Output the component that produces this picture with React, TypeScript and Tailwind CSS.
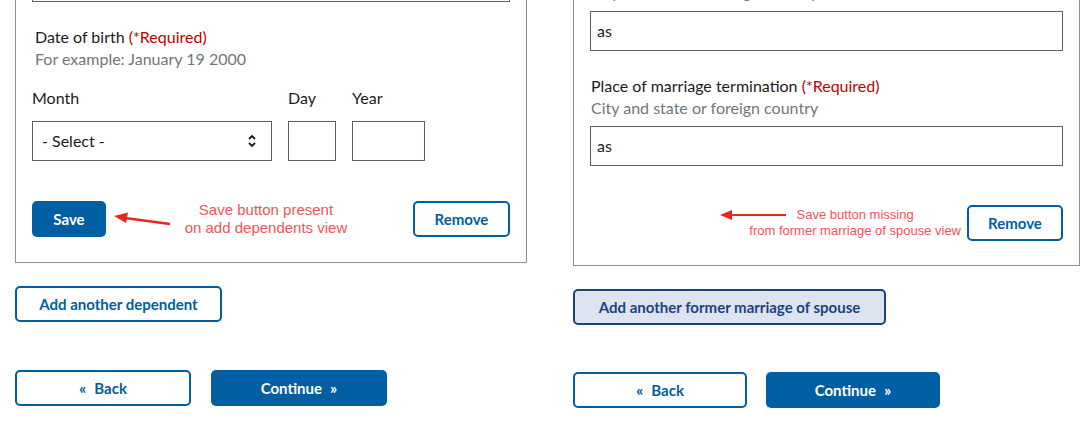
const font = { fontFamily: "Lato, 'Open Sans', sans-serif" };

const Required = () => <span className="text-[#c00000]">(*Required)</span>;

const SelectArrows = () => (
  <svg width="10" height="16" viewBox="0 0 10 16" className="text-[#1b1b1b]">
    <path d="M2 6 L5 3 L8 6" fill="none" stroke="currentColor" strokeWidth="1.8" />
    <path d="M2 10 L5 13 L8 10" fill="none" stroke="currentColor" strokeWidth="1.8" />
  </svg>
);

const OutlineButton = ({ label, className = "" }: { label: React.ReactNode; className?: string }) => (
  <button
    className={`h-9 rounded-[5px] border-2 border-[#005ea2] bg-white text-[15px] font-bold text-[#005ea2] flex items-center justify-center ${className}`}
  >
    {label}
  </button>
);

const PrimaryButton = ({ label, className = "" }: { label: React.ReactNode; className?: string }) => (
  <button
    className={`h-9 rounded-[5px] bg-[#005ea2] text-[15px] font-bold text-white flex items-center justify-center ${className}`}
  >
    {label}
  </button>
);

const NavButtons = ({ narrow = false }: { narrow?: boolean }) => (
  <div className={narrow ? "flex gap-[19px]" : "flex gap-5"}>
    <OutlineButton
      className={narrow ? "w-[174px]" : "w-[176px]"}
      label={
        <span className="flex items-center gap-2">
          <span className="text-[16px]">«</span>Back
        </span>
      }
    />
    <PrimaryButton
      className={narrow ? "w-[174px]" : "w-[176px]"}
      label={
        <span className="flex items-center gap-2">
          Continue<span className="text-[16px]">»</span>
        </span>
      }
    />
  </div>
);

const Annotation = ({ children }: { children: React.ReactNode }) => (
  <div style={{ fontFamily: "'Liberation Sans', Arial, sans-serif" }} className="text-center text-[#f25555]">
    {children}
  </div>
);

export default function App() {
  return (
    <div className="h-[427px] w-[1087px] overflow-hidden bg-white text-[#1b1b1b]" style={font}>
      <div className="flex items-start pl-[15px]">
        {/* left: dependents */}
        <div className="mt-[-55px] w-[512px]">
          <div className="border border-[#8d9195] px-4 pt-4 pb-[25px]">
            <div className="h-10 border border-[#5b616b]" />
            <div className="mt-[24px] pl-[3px] text-[16px] leading-[22px]">
              Date of birth <Required />
            </div>
            <div className="pl-[3px] text-[16px] leading-[22px] text-[#71767a]">For example: January 19 2000</div>
            <div className="mt-[17px] flex gap-4 text-[16px] leading-[22px]">
              <div className="w-[240px]">Month</div>
              <div className="w-12">Day</div>
              <div>Year</div>
            </div>
            <div className="mt-3 flex gap-4">
              <div className="flex h-10 w-[240px] items-center justify-between border border-[#5b616b] pl-[9px] pr-[14px] text-[16px]">
                <span>- Select -</span>
                <SelectArrows />
              </div>
              <div className="h-10 w-12 border border-[#5b616b]" />
              <div className="h-10 w-[73px] border border-[#5b616b]" />
            </div>
            <div className="mt-10 flex items-center">
              <PrimaryButton className="w-[74px]" label="Save" />
              <svg width="60" height="16" viewBox="0 0 60 16" className="ml-[7px] mt-[2px]">
                <line x1="12" y1="6" x2="57" y2="12" stroke="#e8261f" strokeWidth="2.4" />
                <path d="M1 4 L15 0.5 L13 11 Z" fill="#e8261f" />
              </svg>
              <Annotation>
                <div className="ml-[8px] w-[170px] text-[15px] leading-[18px]">
                  Save button present
                  <br />
                  on add dependents view
                </div>
              </Annotation>
              <OutlineButton className="ml-auto w-[97px]" label="Remove" />
            </div>
          </div>
          <OutlineButton className="mt-[23px] w-[207px]" label="Add another dependent" />
          <div className="mt-[48px]">
            <NavButtons />
          </div>
        </div>

        {/* right: former marriage of spouse */}
        <div className="ml-[46px] mt-[-58px] w-[507px]">
          <div className="border border-[#8d9195] px-4 pt-4 pb-[24px]">
            <div className="pl-[1px] text-[16px] leading-[22px]">
              Place of marriage <Required />
            </div>
            <div className="pl-[1px] text-[16px] leading-[22px] text-[#71767a]">City and state or foreign country</div>
            <div className="mt-[8px] flex h-10 items-center border border-[#5b616b] pl-[6px] text-[16px]">as</div>
            <div className="mt-[24px] pl-[1px] text-[16px] leading-[22px]">
              Place of marriage termination <Required />
            </div>
            <div className="pl-[1px] text-[16px] leading-[22px] text-[#71767a]">City and state or foreign country</div>
            <div className="mt-[7px] flex h-10 items-center border border-[#5b616b] pl-[6px] text-[16px]">as</div>
            <div className="mt-[39px] flex items-center justify-end">
              <Annotation>
                <div className="relative text-[13px] leading-[16px]">
                  <svg width="66" height="10" viewBox="0 0 66 10" className="absolute left-[-29px] top-[3px]">
                    <line x1="10" y1="5" x2="66" y2="5" stroke="#e8261f" strokeWidth="2.2" />
                    <path d="M0 5 L12 0 L12 10 Z" fill="#e8261f" />
                  </svg>
                  Save button missing
                  <br />
                  from former marriage of spouse view
                </div>
              </Annotation>
              <OutlineButton className="ml-[6px] w-[96px]" label="Remove" />
            </div>
          </div>
          <button className="mt-[23px] flex h-9 w-[313px] items-center justify-center rounded-[5px] border-2 border-[#1a4480] bg-[#dde4ef] text-[15px] font-bold text-[#1a4480]">
            Add another former marriage of spouse
          </button>
          <div className="mt-[47px]">
            <NavButtons narrow />
          </div>
        </div>
      </div>
    </div>
  );
}
